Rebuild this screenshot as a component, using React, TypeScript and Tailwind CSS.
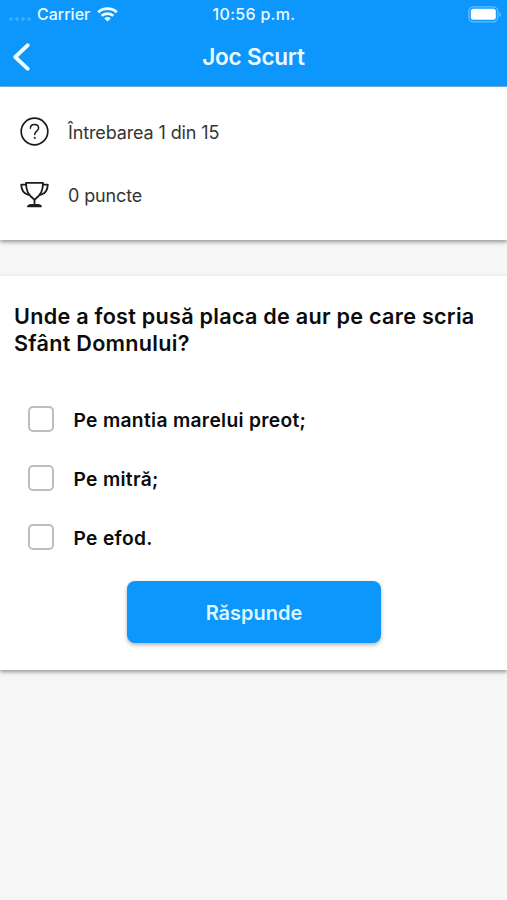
const answers = ["Pe mantia marelui preot;", "Pe mitră;", "Pe efod."];

function WifiIcon() {
  return (
    <svg width="21" height="15" viewBox="0 0 21 15" fill="none" stroke="#f2fcff" strokeWidth="2.8">
      <path d="M1.2 5.3C6.2.4 14.8.4 19.8 5.3" />
      <path d="M4.6 8.8c3.3-3 8.5-3 11.8 0" />
      <path d="M7.3 11.4a4.6 4.6 0 0 1 6.4 0L10.5 14.6Z" fill="#f2fcff" stroke="none" />
    </svg>
  );
}

function BatteryIcon() {
  return (
    <svg width="34" height="17" viewBox="0 0 34 17" fill="none">
      <rect x=".8" y=".8" width="29" height="15" rx="4.5" stroke="#66bdfe" strokeWidth="1.3" />
      <rect x="2.8" y="2.8" width="25" height="11" rx="2.5" fill="#fff" />
      <path d="M31.3 6c2.3.8 2.3 4 0 4.8Z" fill="#66bdfe" />
    </svg>
  );
}

function QuestionIcon() {
  return (
    <svg width="30" height="30" viewBox="0 0 30 30" fill="none" stroke="#1c1c1c" strokeLinecap="round">
      <circle cx="15.5" cy="14.5" r="13.3" strokeWidth="1.7" />
      <path d="M11.4 11.3c0-2.4 1.7-3.7 4.1-3.7s4.1 1.4 4.1 3.5c0 3-3.9 3-3.9 6.3" strokeWidth="1.5" />
      <circle cx="15.7" cy="20.9" r=".6" fill="#1c1c1c" strokeWidth=".8" />
    </svg>
  );
}

function TrophyIcon() {
  return (
    <svg width="30" height="28" viewBox="0 0 30 28" fill="none" stroke="#1c1c1c" strokeWidth="1.8" strokeLinecap="round" strokeLinejoin="round">
      <path d="M7 1.8h17c0 8-2 12-8.500 17C9 13.800 7 9.800 7 1.800Z" />
      <path d="M6.800 3.600H2.200c.2 5.700 2.900 9.100 7.200 10.200M24.200 3.600h4.600c-.2 5.700-2.900 9.100-7.200 10.200" />
      <path d="M15.500 18.800v4.700M9 25.400c.6-1.500 2.500-1.700 6.500-1.700s5.900.2 6.500 1.700Z" />
    </svg>
  );
}

export default function App() {
  return (
    <div className="flex h-[900px] w-full flex-col overflow-hidden bg-[#f6f6f6] font-['Inter',sans-serif] text-[#0b0b0b]">
      <header className="h-[87px] shrink-0 border-b border-[#75b4e6] bg-[#0d96fc] text-[#e9fbff]">
        <div className="grid h-7 grid-cols-3 items-center pr-[5px] pl-[9px] text-base font-medium">
          <div className="flex items-center">
            <div className="mt-[9px] mr-[6px] flex gap-[2px]">
              {[0, 1, 2, 3].map((dot) => (
                <span key={dot} className="size-1 rounded-full bg-[#3dabfc]" />
              ))}
            </div>
            <span className="mr-[7px]">Carrier</span>
            <WifiIcon />
          </div>
          <span className="-ml-[3px] text-center whitespace-nowrap tracking-[0.3px]">10:56 p.m.</span>
          <div className="flex justify-end"><BatteryIcon /></div>
        </div>
        <div className="grid h-[58px] grid-cols-[1fr_auto_1fr] items-center pl-3">
          <svg width="20" height="30" viewBox="0 0 20 30" fill="none" stroke="#f2fcff" strokeWidth="3.8" strokeLinecap="round" strokeLinejoin="round">
            <path d="M15.8 3.2 3.2 15l12.6 11.8" />
          </svg>
          <h1 className="-ml-3 text-[22.5px] font-semibold tracking-[-0.2px]">Joc Scurt</h1>
        </div>
      </header>

      <section className="flex h-[153px] shrink-0 flex-col bg-white pt-[29px] pl-[19px] text-[18px] tracking-[-0.13px] text-[#353535] shadow-[0_2px_4px_rgba(0,0,0,0.4)]">
        <div className="flex h-8 items-center gap-[19px]">
          <QuestionIcon />
          <span>Întrebarea 1 din 15</span>
        </div>
        <div className="mt-[31px] flex h-8 items-center gap-[19px]">
          <TrophyIcon />
          <span>0 puncte</span>
        </div>
      </section>

      <section className="mt-9 flex h-[394px] shrink-0 flex-col bg-white shadow-[0_2px_4px_rgba(0,0,0,0.4)]">
        <h2 className="mt-[27px] pl-[14px] text-[21.6px] leading-[27px] font-semibold tracking-[0.27px] whitespace-nowrap">
          Unde a fost pusă placa de aur pe care scria<br />Sfânt Domnului?
        </h2>
        <div className="mt-[33px] flex flex-col">
          {answers.map((answer) => (
            <label key={answer} className="flex h-[59.2px] items-center gap-5 pl-[27.5px] text-[19.2px] font-semibold tracking-[0.33px]">
              <input type="checkbox" className="-mt-[2px] size-[26px] appearance-none rounded-[5px] border-2 border-[#bdbdbd] bg-white" />
              <span className="pt-px">{answer}</span>
            </label>
          ))}
        </div>
        <button className="mt-[13.4px] ml-[127px] h-[62px] w-[254px] rounded-lg bg-[#0d96fc] pt-[2px] text-[20px] font-semibold text-[#d9f8ff] shadow-[0_2px_4px_rgba(0,0,0,0.3)]">
          Răspunde
        </button>
      </section>
    </div>
  );
}
